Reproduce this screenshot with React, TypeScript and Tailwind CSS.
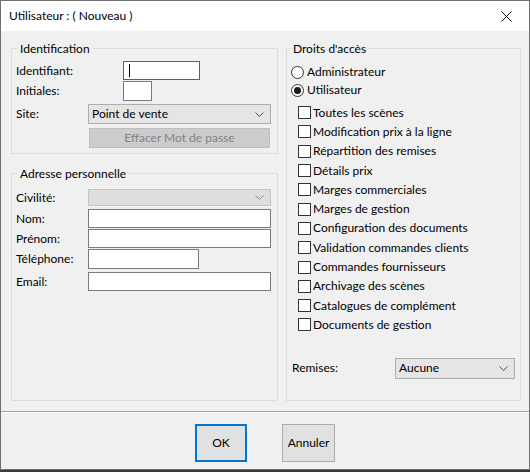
import React from "react";

const font = { fontFamily: '"Lato", "Noto Sans", sans-serif' };

function Chevron({ muted }: { muted?: boolean }) {
  return (
    <svg width="9" height="5" viewBox="0 0 9 5" className="shrink-0">
      <polyline points="0.5,0.5 4.5,4.5 8.5,0.5" fill="none" stroke={muted ? "#8a8a8a" : "#505050"} strokeWidth="1" />
    </svg>
  );
}

function Select({ value, disabled, className }: { value?: string; disabled?: boolean; className: string }) {
  return (
    <div
      className={
        "flex items-center justify-between pl-[3px] pr-[6px] text-[12px] " +
        (disabled ? "border border-[#c4c4c4] bg-[#dedede] " : "border border-[#adadad] bg-[#e5e5e5] ") +
        className
      }
    >
      <span className="leading-none">{value}</span>
      <Chevron muted={disabled} />
    </div>
  );
}

function Input({ className }: { className: string }) {
  return <div className={"border border-[#7a7a7a] bg-white " + className} />;
}

function Check({ label }: { label: string }) {
  return (
    <div className="flex h-[19.3px] items-center pl-[7px]">
      <div className="h-[13px] w-[13px] border border-[#333333] bg-white" />
      <span className="ml-[2px] text-[12px] leading-none">{label}</span>
    </div>
  );
}

function Radio({ label, checked }: { label: string; checked?: boolean }) {
  return (
    <div className="flex h-[18px] items-center">
      <div className="flex h-[13px] w-[13px] items-center justify-center rounded-full border border-[#333333] bg-white">
        {checked && <div className="h-[7px] w-[7px] rounded-full bg-[#1a1a1a]" />}
      </div>
      <span className="ml-[3px] text-[12px] leading-none">{label}</span>
    </div>
  );
}

const rights = [
  "Toutes les scènes",
  "Modification prix à la ligne",
  "Répartition des remises",
  "Détails prix",
  "Marges commerciales",
  "Marges de gestion",
  "Configuration des documents",
  "Validation commandes clients",
  "Commandes fournisseurs",
  "Archivage des scènes",
  "Catalogues de complément",
  "Documents de gestion",
];

export default function App() {
  return (
    <div className="h-[472px] w-[530px] bg-[#3a3a3a] text-black" style={font}>
      <div className="flex h-[470px] w-[530px] flex-col border border-[#707070] bg-[#f0f0f0]">
        {/* title bar */}
        <div className="flex h-[30px] items-center justify-between bg-white pl-[8px] pr-[17px]">
          <span className="text-[12px]">Utilisateur : ( Nouveau )</span>
          <svg width="11" height="11" viewBox="0 0 11 11">
            <path d="M0.5 0.5 L10.5 10.5 M10.5 0.5 L0.5 10.5" stroke="#111" strokeWidth="1" />
          </svg>
        </div>

        {/* content */}
        <div className="flex h-[380px] gap-[8px] pb-[10px] pl-[10px] pr-[8px] pt-[10px]">
          <div className="flex w-[267px] flex-col">
            <fieldset className="h-[113px] border border-[#dcdcdc] px-[4px]">
              <legend className="ml-[1px] px-[3px] text-[12px] leading-[15px]">Identification</legend>
              <div className="mt-[5px] flex h-[19px] items-center">
                <span className="w-[107px] text-[12px]">Identifiant:</span>
                <div className="flex h-[19px] w-[77px] items-center border border-[#0078d7] bg-white pl-[5px]">
                  <div className="h-[13px] w-px bg-black" />
                </div>
              </div>
              <div className="mt-[1px] flex h-[20px] items-center">
                <span className="w-[107px] text-[12px]">Initiales:</span>
                <Input className="h-[20px] w-[29px]" />
              </div>
              <div className="mt-[3px] flex h-[20px] items-center">
                <span className="w-[72px] text-[12px]">Site:</span>
                <Select value="Point de vente" className="h-[20px] w-[183px]" />
              </div>
              <div className="mt-[4px] flex h-[20px] items-center pl-[73px]">
                <button className="h-[20px] w-[181px] border border-[#bfbfbf] bg-[#cccccc] text-[12px] text-[#838383]">
                  Effacer Mot de passe
                </button>
              </div>
            </fieldset>

            <fieldset className="mt-[12px] h-[235px] border border-[#dcdcdc] px-[4px]">
              <legend className="ml-[1px] px-[3px] text-[12px] leading-[15px]">Adresse personnelle</legend>
              <div className="mt-[8px] flex h-[17px] items-center">
                <span className="w-[72px] text-[12px]">Civilité:</span>
                <Select disabled className="h-[17px] w-[183px]" />
              </div>
              <div className="mt-[3px] flex h-[19px] items-center">
                <span className="w-[72px] text-[12px]">Nom:</span>
                <Input className="h-[19px] w-[183px]" />
              </div>
              <div className="mt-[1px] flex h-[19px] items-center">
                <span className="w-[72px] text-[12px]">Prénom:</span>
                <Input className="h-[19px] w-[183px]" />
              </div>
              <div className="mt-[1px] flex h-[20px] items-center">
                <span className="w-[72px] text-[12px]">Téléphone:</span>
                <Input className="h-[20px] w-[111px]" />
              </div>
              <div className="mt-[3px] flex h-[19px] items-center">
                <span className="w-[72px] text-[12px]">Email:</span>
                <Input className="h-[19px] w-[183px]" />
              </div>
            </fieldset>
          </div>

          <fieldset className="h-[360px] flex-1 border border-[#dcdcdc] px-[4px]">
            <legend className="px-[2px] text-[12px] leading-[15px]">Droits d'accès</legend>
            <div className="mt-[7px]">
              <Radio label="Administrateur" />
              <Radio label="Utilisateur" checked />
            </div>
            <div className="mt-[4px]">
              {rights.map((r) => (
                <Check key={r} label={r} />
              ))}
            </div>
            <div className="mt-[23px] flex h-[21px] items-center">
              <span className="w-[104px] pl-[1px] text-[12px]">Remises:</span>
              <Select value="Aucune" className="h-[21px] w-[120px]" />
            </div>
          </fieldset>
        </div>

        {/* separator */}
        <div className="h-px bg-[#a0a0a0]" />
        <div className="h-px bg-white" />

        {/* footer */}
        <div className="flex flex-1 justify-center gap-[35px] pt-[11px]">
          <button className="h-[38px] w-[52px] border-2 border-[#0078d7] bg-[#e1e1e1] text-[12px]">OK</button>
          <button className="h-[38px] w-[53px] border border-[#adadad] bg-[#e1e1e1] text-[12px]">Annuler</button>
        </div>
      </div>
    </div>
  );
}
